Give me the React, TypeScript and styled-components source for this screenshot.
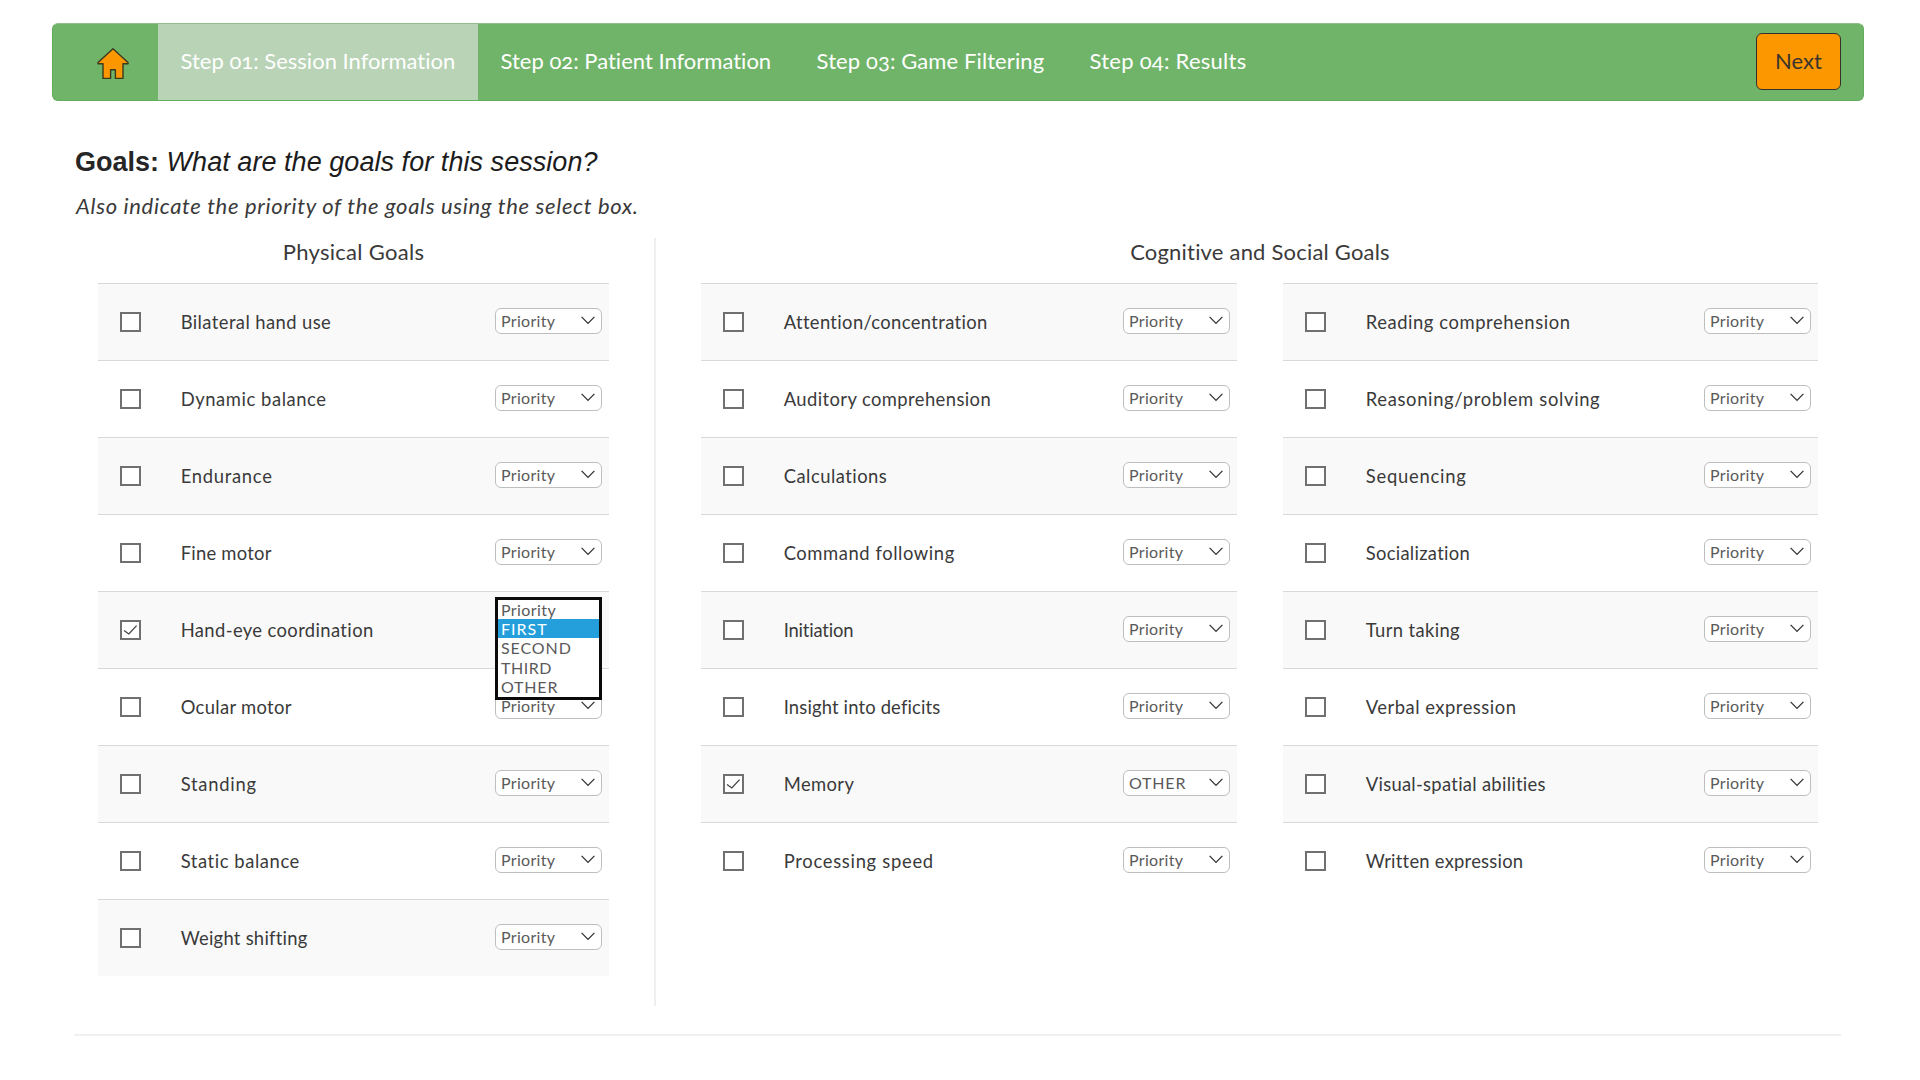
import React from "react";
import styled, { createGlobalStyle, css } from "styled-components";

const GlobalStyle = createGlobalStyle`
  *, *::before, *::after { box-sizing: border-box; }
  html, body { margin: 0; background: #fff; }
  body {
    font-family: Lato, "Open Sans", sans-serif;
    font-variant-ligatures: none;
    color: #3a3a3a;
  }
`;

const Page = styled.div`
  width: 1920px;
  height: 1080px;
  padding: 23px 56px 0 52px;
  overflow: hidden;
`;

const NavBar = styled.nav`
  display: flex;
  align-items: stretch;
  width: 1812px;
  height: 78px;
  background: #70b46a;
  border: 1px solid #62ae5b;
  border-top-color: #8fc08a;
  border-radius: 6px;
`;

const HomeLink = styled.a`
  display: flex;
  width: 105px;
  padding: 23px 0 0 43px;
`;

const Tab = styled.a<{ $width: number; $tracking: number; $active?: boolean }>`
  width: ${(p) => p.$width}px;
  padding-left: 22.6px;
  font-size: 22px;
  line-height: 74px;
  white-space: nowrap;
  font-variant-numeric: oldstyle-nums;
  letter-spacing: ${(p) => p.$tracking}px;
  color: #fff;
  ${(p) => p.$active && css`background: #b8d3b5;`}
`;

const NextButton = styled.button`
  width: 85px;
  height: 57px;
  margin: 9px 22px 0 auto;
  padding: 0 0 3px;
  border: 1.5px solid #35312a;
  border-radius: 6px;
  background: #fc9700;
  font: 22px Lato, sans-serif;
  color: #3a352c;
`;

const Heading = styled.h1`
  margin: 44px 0 0 23px;
  font: 27px/34px "Liberation Sans", Arial, sans-serif;
  color: #1c1c1c;
  white-space: nowrap;

  strong { color: #262626; }
  em { letter-spacing: 0.05px; }
`;

const Hint = styled.p`
  margin: 12px 0 0 24px;
  font-size: 22px;
  line-height: 30px;
  font-style: italic;
  letter-spacing: 0.67px;
  white-space: nowrap;
`;

const Board = styled.main`
  display: flex;
  height: 768px;
  margin-top: 17px;
`;

const PhysicalSection = styled.section`
  width: 604px;
  padding: 0 45px 0 46px;
  border-right: 2px solid #efefef;
`;

const CognitiveSection = styled.section`
  width: 1163px;
  padding-left: 45px;
`;

const SectionTitle = styled.h2<{ $tracking: number }>`
  margin: -1px 0 16px;
  font-size: 22px;
  font-weight: 400;
  line-height: 30px;
  letter-spacing: ${(p) => p.$tracking}px;
  text-align: center;
`;

const Columns = styled.div`
  display: grid;
  grid-template-columns: 536px 535px;
  column-gap: 46px;
`;

const List = styled.ul`
  margin: 0;
  padding: 0;
  list-style: none;
`;

const Row = styled.li`
  display: flex;
  align-items: center;
  height: 77px;
  padding: 0 7px 0 22px;
  border-top: 1.5px solid #d9d9d9;

  &:nth-child(odd) { background: #f9f9f9; }
`;

const Box = styled.span`
  display: flex;
  align-items: center;
  justify-content: center;
  width: 21px;
  height: 20px;
  margin-left: -0.5px;
  border: 2px solid #707070;
  background: #fff;
`;

const Label = styled.span<{ $tracking: number }>`
  flex: 1;
  margin-left: 40.2px;
  margin-top: -1px;
  font-size: 18.4px;
  line-height: 24px;
  letter-spacing: ${(p) => p.$tracking}px;
  white-space: nowrap;
`;

const SelectWrap = styled.div`
  position: relative;
  margin-bottom: 3px;
`;

const SelectBox = styled.div`
  display: flex;
  align-items: center;
  justify-content: space-between;
  width: 107px;
  height: 26px;
  padding: 0 6px 1px 5px;
  border: 1.5px solid #bebebe;
  border-radius: 6px;
  background: #fff;
  font-size: 16px;
  color: #5a5a5a;
`;

const Tracked = styled.span<{ $tracking: number }>`
  letter-spacing: ${(p) => p.$tracking}px;
`;

const Menu = styled.ul`
  position: absolute;
  z-index: 1;
  top: -19px;
  left: 0;
  width: 107px;
  height: 103px;
  margin: 0;
  padding: 0;
  border: 3px solid #0a0a0a;
  background: #fff;
  list-style: none;
`;

const Option = styled.li<{ $selected: boolean }>`
  height: 19.4px;
  padding-left: 3px;
  font-size: 16px;
  line-height: 19.4px;
  color: ${(p) => (p.$selected ? "#fff" : "#5a5a5a")};
  background: ${(p) => (p.$selected ? "#259fdc" : "transparent")};
`;

const Footer = styled.hr`
  width: 1767px;
  height: 2px;
  margin: 28px 0 0 22px;
  border: 0;
  background: #f0f0f0;
`;

type Goal = [label: string, tracking: number, state?: "open" | "OTHER"];

const physical: Goal[] = [
  ["Bilateral hand use", 0.41],
  ["Dynamic balance", 0.57],
  ["Endurance", 0.72],
  ["Fine motor", 0.24],
  ["Hand-eye coordination", 0.38, "open"],
  ["Ocular motor", 0.32],
  ["Standing", 0.74],
  ["Static balance", 0.57],
  ["Weight shifting", 0.26],
];

const cognitive: Goal[] = [
  ["Attention/concentration", 0.36],
  ["Auditory comprehension", 0.41],
  ["Calculations", 0.48],
  ["Command following", 0.57],
  ["Initiation", -0.18],
  ["Insight into deficits", 0.16],
  ["Memory", 0.4, "OTHER"],
  ["Processing speed", 0.71],
];

const social: Goal[] = [
  ["Reading comprehension", 0.57],
  ["Reasoning/problem solving", 0.66],
  ["Sequencing", 0.78],
  ["Socialization", 0.3],
  ["Turn taking", 0.38],
  ["Verbal expression", 0.51],
  ["Visual-spatial abilities", 0.29],
  ["Written expression", 0.24],
];

const priorities: [string, number][] = [
  ["Priority", 0.4],
  ["FIRST", 1],
  ["SECOND", 0.9],
  ["THIRD", 0.5],
  ["OTHER", 0.8],
];

const HomeIcon = () => (
  <svg width="34" height="34" viewBox="0 0 34 34">
    <path
      d="M17 1.7 2 15.6v1.2h5v14.6h7.6v-8.6h4.8v8.6H27V16.8h5v-1.2z"
      fill="#fc9700"
      stroke="#3c3a1c"
      strokeWidth="1.4"
      strokeLinejoin="round"
    />
  </svg>
);

const Chevron = () => (
  <svg width="14" height="9" viewBox="0 0 14 9">
    <path d="M.6.9 7 7.4 13.4.9" fill="none" stroke="#333" strokeWidth="1.3" />
  </svg>
);

const Check = () => (
  <svg width="15" height="12" viewBox="0 0 15 12">
    <path d="M1 6.4 5.8 10 13.6 1.600" fill="none" stroke="#444" strokeWidth="1.3" />
  </svg>
);

const GoalList = ({ goals }: { goals: Goal[] }) => (
  <List>
    {goals.map(([label, tracking, state]) => (
      <Row key={label}>
        <Box>{state && <Check />}</Box>
        <Label $tracking={tracking}>{label}</Label>
        <SelectWrap>
          <SelectBox>
            {state !== "open" && (
              <Tracked $tracking={state === "OTHER" ? 0.8 : 0.3}>{state ?? "Priority"}</Tracked>
            )}
            {state !== "open" && <Chevron />}
          </SelectBox>
          {state === "open" && (
            <Menu>
              {priorities.map(([name, gap]) => (
                <Option key={name} $selected={name === "FIRST"}>
                  <Tracked $tracking={gap}>{name}</Tracked>
                </Option>
              ))}
            </Menu>
          )}
        </SelectWrap>
      </Row>
    ))}
  </List>
);

export default function App() {
  return (
    <>
      <GlobalStyle />
      <Page>
        <NavBar>
          <HomeLink><HomeIcon /></HomeLink>
          <Tab $width={320} $tracking={0} $active>Step 01: Session Information</Tab>
          <Tab $width={316} $tracking={0}>Step 02: Patient Information</Tab>
          <Tab $width={273} $tracking={0.1}>Step 03: Game Filtering</Tab>
          <Tab $width={202} $tracking={0.25}>Step 04: Results</Tab>
          <NextButton>Next</NextButton>
        </NavBar>
        <Heading>
          <strong>Goals:</strong> <em>What are the goals for this session?</em>
        </Heading>
        <Hint>Also indicate the priority of the goals using the select box.</Hint>
        <Board>
          <PhysicalSection>
            <SectionTitle $tracking={0.3}>Physical Goals</SectionTitle>
            <GoalList goals={physical} />
          </PhysicalSection>
          <CognitiveSection>
            <SectionTitle $tracking={0.2}>Cognitive and Social Goals</SectionTitle>
            <Columns>
              <GoalList goals={cognitive} />
              <GoalList goals={social} />
            </Columns>
          </CognitiveSection>
        </Board>
        <Footer />
      </Page>
    </>
  );
}
